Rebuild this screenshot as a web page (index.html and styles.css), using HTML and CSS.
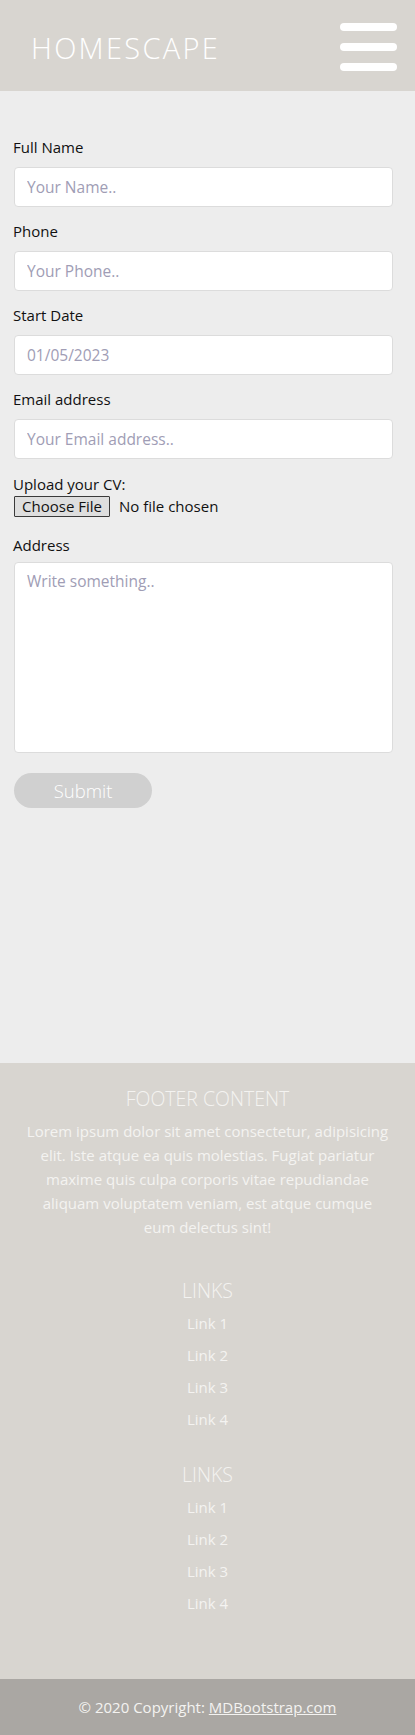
FILE: index.html
```html
<!DOCTYPE html>
<html lang="en">
<head>
<meta charset="utf-8">
<title>Homescape</title>
<link rel="stylesheet" href="styles.css">
</head>
<body>
<header class="topbar">
  <div class="brand">HOMESCAPE</div>
  <div class="burger" aria-label="menu">
    <span></span><span></span><span></span>
  </div>
</header>

<main class="main">
  <form class="form">
    <label class="lbl" for="fname">Full Name</label>
    <input class="field" id="fname" type="text" placeholder="Your Name..">

    <label class="lbl" for="phone">Phone</label>
    <input class="field" id="phone" type="text" placeholder="Your Phone..">

    <label class="lbl" for="sdate">Start Date</label>
    <input class="field" id="sdate" type="text" placeholder="01/05/2023">

    <label class="lbl" for="email">Email address</label>
    <input class="field" id="email" type="text" placeholder="Your Email address..">

    <div class="upload">
      <div class="lbl-inline">Upload your CV:</div>
      <div class="file">
        <span class="file-btn">Choose File</span>
        <span class="file-name">No file chosen</span>
      </div>
    </div>

    <label class="lbl lbl-tight" for="addr">Address</label>
    <textarea class="area" id="addr" placeholder="Write something.."></textarea>

    <button class="submit" type="button">Submit</button>
  </form>
</main>

<footer class="footer">
  <div class="foot-inner">
    <section class="fcol">
      <h5 class="fhead">FOOTER CONTENT</h5>
      <p class="ftext">Lorem ipsum dolor sit amet consectetur, adipisicing elit. Iste atque ea quis molestias. Fugiat pariatur maxime quis culpa corporis vitae repudiandae aliquam voluptatem veniam, est atque cumque<br>eum delectus sint!</p>
    </section>
    <section class="fcol">
      <h5 class="fhead">LINKS</h5>
      <ul class="flinks">
        <li><a href="#">Link 1</a></li>
        <li><a href="#">Link 2</a></li>
        <li><a href="#">Link 3</a></li>
        <li><a href="#">Link 4</a></li>
      </ul>
    </section>
    <section class="fcol last">
      <h5 class="fhead">LINKS</h5>
      <ul class="flinks">
        <li><a href="#">Link 1</a></li>
        <li><a href="#">Link 2</a></li>
        <li><a href="#">Link 3</a></li>
        <li><a href="#">Link 4</a></li>
      </ul>
    </section>
  </div>
  <div class="copy">© 2020 Copyright: <a href="#">MDBootstrap.com</a></div>
</footer>
</body>
</html>
```
FILE: styles.css
```css
* { box-sizing: border-box; }
html, body { margin: 0; padding: 0; }
body {
  font-family: "Open Sans", "Noto Sans", sans-serif;
  font-size: 15px;
  line-height: 24px;
  color: #111;
  background: #ededed;
}

.topbar {
  height: 91px;
  background: #d8d5d0;
  display: flex;
  align-items: center;
  justify-content: space-between;
  padding: 0 18px 0 31px;
}
.brand {
  color: #fff;
  font-size: 29px;
  font-weight: 300;
  letter-spacing: 2.3px;
  line-height: 1;
  margin-top: 4px;
}
.burger {
  width: 57px;
  display: flex;
  flex-direction: column;
  gap: 12px;
  margin-top: 2px;
}
.burger span {
  display: block;
  height: 8px;
  border-radius: 4px;
  background: #fff;
}

.main {
  height: 972px;
  padding: 44px 22px 0 13px;
}
.form {
  display: flex;
  flex-direction: column;
  align-items: flex-start;
}
.lbl, .lbl-inline {
  display: block;
  font-size: 15px;
  line-height: 24px;
  color: #111;
}
.lbl { margin-bottom: 8px; }
.lbl-tight { margin-bottom: 5px; }
.field {
  display: block;
  width: calc(100% - 1px);
  margin-left: 1px;
  height: 40px;
  border: 1px solid #dcdcdc;
  border-radius: 4px;
  background: #fff;
  padding: 0 12px;
  font-family: inherit;
  font-size: 15.5px;
  color: #333;
  margin-bottom: 12px;
  outline: none;
}
.field::placeholder, .area::placeholder { color: #a09db5; opacity: 1; }

.upload { margin-top: 1px; margin-bottom: 16px; }
.file {
  display: flex;
  align-items: flex-start;
  gap: 9px;
  margin-top: 0;
}
.file-btn {
  display: inline-block;
  height: 21px;
  width: 96px;
  margin-left: 1px;
  border: 1px solid #3a3a3a;
  border-radius: 1px;
  background: #dedede;
  font-size: 15px;
  line-height: 18px;
  text-align: center;
  color: #111;
}
.file-name { font-size: 15px; line-height: 21px; }

.area {
  display: block;
  width: calc(100% - 1px);
  margin-left: 1px;
  height: 191px;
  border: 1px solid #dcdcdc;
  border-radius: 4px;
  background: #fff;
  padding: 6px 12px;
  font-family: inherit;
  font-size: 15.5px;
  line-height: 24px;
  resize: none;
  outline: none;
  margin-bottom: 20px;
}

.submit {
  width: 138px;
  height: 35px;
  margin-left: 1px;
  border: none;
  border-radius: 18px;
  background: #d0d0d0;
  color: #fff;
  font-family: inherit;
  font-size: 18.5px;
  font-weight: 300;
  padding: 0;
}

.footer { background: #d8d5d0; color: #f4f3f1; text-align: center; }
.foot-inner { padding: 24px 24px 56px; }
.fcol { margin-bottom: 32px; }
.fcol.last { margin-bottom: 0; }
.fhead {
  margin: 0 0 8px;
  font-size: 19.5px;
  font-weight: 300;
  line-height: 24px;
}
.ftext { margin: 0 0 40px; font-size: 15px; line-height: 24px; }
.flinks { list-style: none; margin: 0; padding: 0; }
.flinks li { margin-bottom: 8px; line-height: 24px; font-size: 15px; }
.flinks a { color: #f4f3f1; text-decoration: none; }

.copy {
  background: #aaa7a3;
  color: #f4f3f1;
  height: 56px;
  padding: 16px;
  font-size: 15px;
  line-height: 24px;
}
.copy a { color: #f4f3f1; text-decoration: underline; }
```
